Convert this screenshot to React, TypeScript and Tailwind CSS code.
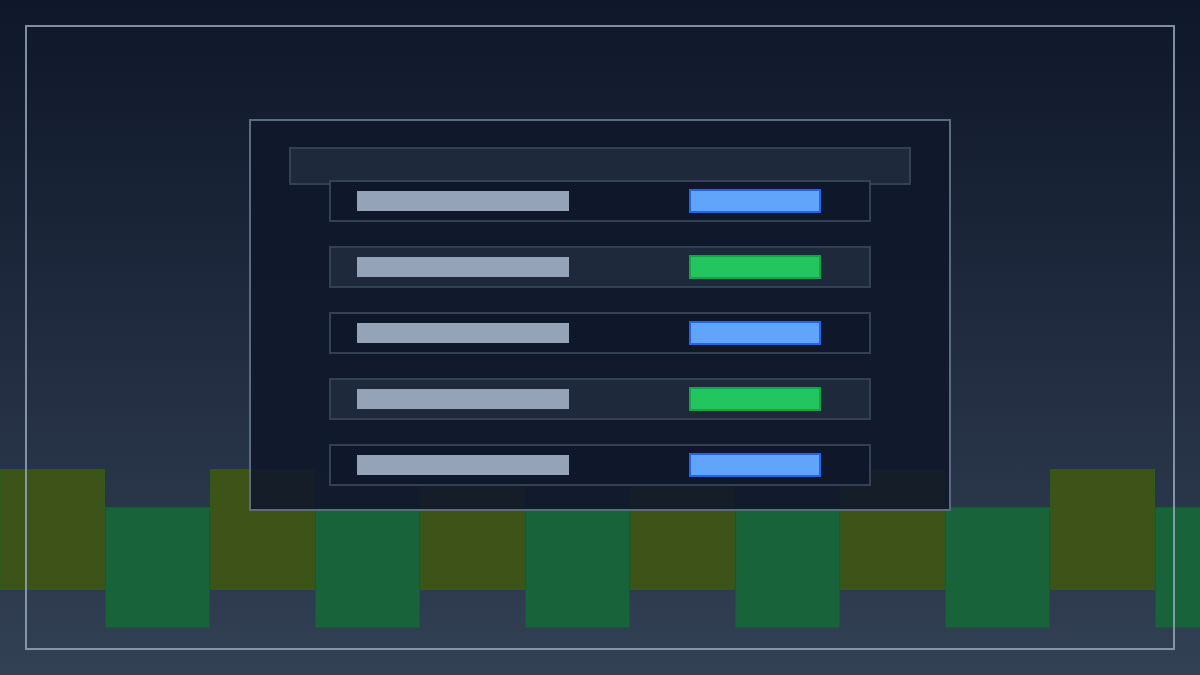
import React from "react";

const rows = [
  { dark: true, color: "blue" },
  { dark: false, color: "green" },
  { dark: true, color: "blue" },
  { dark: false, color: "green" },
  { dark: true, color: "blue" },
];

export default function App() {
  const blocks = Array.from({ length: 12 }, (_, i) => i);
  return (
    <div className="w-[1200px] h-[675px] overflow-hidden grid bg-gradient-to-b from-[#0f172a] to-[#334155]" style={{ fontFamily: "'Liberation Sans', sans-serif" }}>
      {/* blocks layer */}
      <div className="[grid-area:1/1] flex items-start pt-[469px] w-[1260px]">
        {blocks.map((i) =>
          i % 2 === 0 ? (
            <div key={i} className="shrink-0 w-[105px] h-[121px] bg-[#3d5317] border border-[#2f5a1c]" />
          ) : (
            <div key={i} className="shrink-0 w-[105px] h-[121px] mt-[38px] bg-[#19633a] border border-[#155a30]" />
          )
        )}
      </div>

      {/* frame layer */}
      <div className="[grid-area:1/1] pt-[25px] pl-[25px]">
        <div className="w-[1150px] h-[625px] border-2 border-[#94a3b8]/85" />
      </div>

      {/* panel layer */}
      <div className="[grid-area:1/1] pt-[119px] pl-[249px]">
        <div className="w-[702px] h-[392px] border-2 border-[#64748b]/90 bg-[#0f172a]/90 pt-[26px] pl-[38px]">
          <div className="w-[622px] h-[38px] bg-[#1e293b] border-2 border-[#334155]" />
          <div className="flex flex-col gap-[24px] -mt-[5px] pl-[40px]">
            {rows.map((r, i) => (
              <div
                key={i}
                className={
                  "w-[542px] h-[42px] border-2 border-[#334155] flex items-center pl-[26px] " +
                  (r.dark ? "bg-[#0f172a]" : "bg-[#1e293b]")
                }
              >
                <div className="w-[212px] h-[20px] bg-[#94a3b8]" />
                <div
                  className={
                    "ml-[120px] w-[132px] h-[24px] border-2 " +
                    (r.color === "blue" ? "bg-[#60a5fa] border-[#2563eb]" : "bg-[#22c55e] border-[#16a34a]")
                  }
                />
              </div>
            ))}
          </div>
        </div>
      </div>
    </div>
  );
}
